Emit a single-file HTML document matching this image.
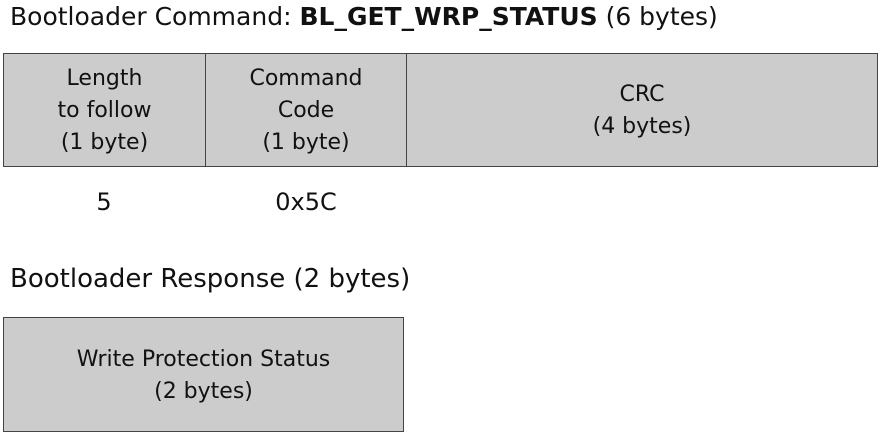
<!DOCTYPE html>
<html><head><style>
body{margin:0;width:884px;height:433px;background:#fff;font-family:"DejaVu Sans","Liberation Sans",sans-serif;color:#111;position:relative;overflow:hidden}
.t{position:absolute;font-size:25px;white-space:nowrap}
.box{position:absolute;background:#cccccc;border:1px solid #444;box-sizing:border-box;display:flex;align-items:center;justify-content:center;text-align:center;font-size:22px;line-height:32px;padding-top:2px}
.v{position:absolute;font-size:24px;width:200px;text-align:center}
</style></head><body>
<div class="t" style="left:10px;top:2px">Bootloader Command: <b>BL_GET_WRP_STATUS</b> (6 bytes)</div>
<div class="box" style="left:3px;top:53px;width:203px;height:114px">Length<br>to follow<br>(1 byte)</div>
<div class="box" style="left:205px;top:53px;width:202px;height:114px">Command<br>Code<br>(1 byte)</div>
<div class="box" style="left:406px;top:53px;width:472px;height:114px">CRC<br>(4 bytes)</div>
<div class="v" style="left:4px;top:188px">5</div>
<div class="v" style="left:206px;top:188px">0x5C</div>
<div class="t" style="left:10px;top:264px;font-size:26px">Bootloader Response (2 bytes)</div>
<div class="box" style="left:3px;top:317px;width:401px;height:115px">Write Protection Status<br>(2 bytes)</div>
</body></html>
